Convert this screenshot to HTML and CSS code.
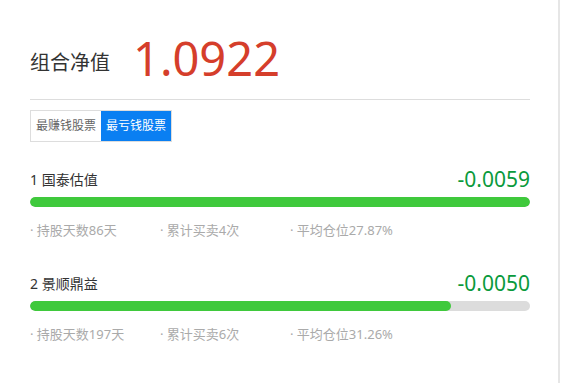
FILE: index.html
```html
<!DOCTYPE html>
<html lang="zh-CN">
<head>
    <meta charset="UTF-8">
    <title>组合净值</title>
    <link rel="stylesheet" href="styles.css">
</head>
<body>
    <div class="page">
        <div class="summary">
            <span class="summary-label">组合净值</span>
            <span class="summary-value">1.0922</span>
        </div>

        <div class="tabs">
            <span class="tab">最赚钱股票</span>
            <span class="tab active">最亏钱股票</span>
        </div>

        <div class="stock">
            <div class="stock-head">
                <span class="stock-name">1 国泰估值</span>
                <span class="stock-change">-0.0059</span>
            </div>
            <div class="bar"><div class="bar-fill" style="width: 100%;"></div></div>
            <div class="stats">
                <span class="stat">· 持股天数86天</span>
                <span class="stat">· 累计买卖4次</span>
                <span class="stat">· 平均仓位27.87%</span>
            </div>
        </div>

        <div class="stock">
            <div class="stock-head">
                <span class="stock-name">2 景顺鼎益</span>
                <span class="stock-change">-0.0050</span>
            </div>
            <div class="bar"><div class="bar-fill" style="width: 84.2%;"></div></div>
            <div class="stats">
                <span class="stat">· 持股天数197天</span>
                <span class="stat">· 累计买卖6次</span>
                <span class="stat">· 平均仓位31.26%</span>
            </div>
        </div>
    </div>
</body>
</html>
```

FILE: styles.css
```css
body {
    margin: 0;
    font-family: "Noto Sans", "Noto Sans CJK SC", sans-serif;
    background-color: #fff;
    color: #333;
}
.page {
    width: 500px;
    min-height: 383px;
    padding: 0 28px 0 30px;
    border-right: 2px solid #e6e6e6;
    box-sizing: content-box;
}
.summary {
    display: flex;
    align-items: center;
    height: 100px;
    border-bottom: 1px solid #dddddd;
    box-sizing: border-box;
    padding-top: 18px;
}
.summary-label {
    font-size: 20px;
    margin-right: 23px;
    margin-top: 6px;
}
.summary-value {
    font-size: 47px;
    color: #d53e2b;
    line-height: 1;
}
.tabs {
    display: inline-flex;
    margin-top: 10px;
    border: 1px solid #dddddd;
}
.tab {
    width: 70px;
    text-align: center;
    font-size: 12px;
    line-height: 30px;
    color: #666;
}
.tab.active {
    background-color: #0a7ff2;
    color: #fff;
}
.stock {
    padding-top: 26px;
}
.stock + .stock {
    padding-top: 33px;
}
.stock-head {
    display: flex;
    justify-content: space-between;
    align-items: center;
    height: 22px;
}
.stock-name {
    font-size: 14px;
}
.stock-change {
    font-size: 21px;
    color: #0a9a3c;
}
.bar {
    margin-top: 7px;
    height: 10px;
    border-radius: 5px;
    background-color: #dcdcdc;
    overflow: hidden;
}
.bar-fill {
    height: 100%;
    border-radius: 5px;
    background-color: #3fc93c;
}
.stats {
    display: flex;
    margin-top: 13px;
    font-size: 13px;
    color: #aaa;
}
.stat {
    width: 130px;
}
```
